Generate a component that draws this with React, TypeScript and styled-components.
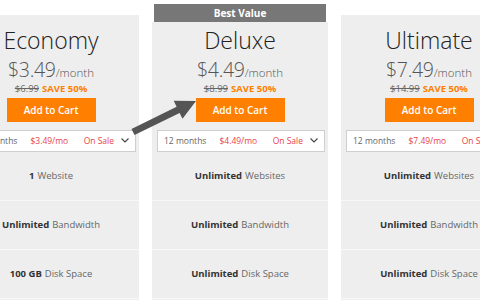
import styled, { createGlobalStyle } from 'styled-components';

const GlobalStyle = createGlobalStyle`
  html, body {
    margin: 0;
    padding: 0;
    background: #ffffff;
    font-family: "Open Sans", "Noto Sans", sans-serif;
    overflow: hidden;
  }
`;

const Page = styled.div`
  position: relative;
  width: 480px;
  height: 300px;
  overflow: hidden;
  background: #ffffff;
`;

const CardRow = styled.div`
  display: flex;
  align-items: flex-start;
  gap: 13px;
  margin-left: -37px;
  padding-top: 4px;
`;

const Card = styled.div<{ $featured?: boolean }>`
  flex: 0 0 176px;
  display: flex;
  flex-direction: column;
  margin-top: ${(p) => (p.$featured ? '0' : '11px')};
`;

const Ribbon = styled.div`
  height: 18px;
  background: #777777;
  color: #ffffff;
  font-size: 10px;
  font-weight: 700;
  line-height: 18px;
  text-align: center;
  margin: 0 2px;
`;

const CardBody = styled.div<{ $featured?: boolean }>`
  background: #eeeeee;
  padding-top: ${(p) => (p.$featured ? '3.5px' : '10.5px')};
  display: flex;
  flex-direction: column;
  align-items: center;
  height: 300px;
`;

const Title = styled.div`
  font-size: 23px;
  font-weight: 300;
  line-height: 28px;
  color: #222222;
`;

const Price = styled.div`
  margin-top: 5px;
  font-size: 19.5px;
  letter-spacing: -0.3px;
  font-weight: 300;
  line-height: 21px;
  height: 21px;
  color: #555555;

  span {
    font-size: 11.5px;
    letter-spacing: 0;
    line-height: 1;
  }
`;

const SaveLine = styled.div`
  margin-top: 3px;
  font-size: 9.5px;
  line-height: 12px;
  height: 12px;
  display: flex;
  gap: 3px;
`;

const OldPrice = styled.s`
  color: #666666;
`;

const Save = styled.span`
  color: #ff7f00;
  font-weight: 700;
`;

const CartButton = styled.button`
  margin-top: 3px;
  width: 89px;
  height: 24px;
  border: none;
  background: #ff8000;
  color: #ffffff;
  font-family: inherit;
  font-size: 10px;
  font-weight: 600;
  padding: 0;
`;

const Term = styled.div`
  margin-top: 8px;
  align-self: stretch;
  margin-left: 5px;
  margin-right: 3px;
  height: 22px;
  box-sizing: border-box;
  background: #ffffff;
  border: 1px solid #cfcfcf;
  display: flex;
  align-items: center;
  padding: 0 6px;
  font-size: 8.5px;
  color: #666666;
`;

const TermPrice = styled.span`
  color: #e8434b;
  margin-left: 13px;
`;

const OnSale = styled.span`
  color: #e8434b;
  margin-left: auto;
  margin-right: 7px;
`;

const Feature = styled.div`
  align-self: stretch;
  height: 48px;
  border-bottom: 1px solid #f8f8f8;
  display: flex;
  align-items: center;
  justify-content: center;
  font-size: 9.5px;
  color: #666666;

  b {
    color: #333333;
    font-weight: 700;
    margin-right: 3px;
  }
`;

const ArrowLayer = styled.svg`
  position: absolute;
  left: 120px;
  top: 90px;
`;

const Chevron = () => (
  <svg width="8" height="5" viewBox="0 0 8 5">
    <path d="M0.5 0.5 L4 4 L7.5 0.5" fill="none" stroke="#444" strokeWidth="1.1" />
  </svg>
);

interface Plan {
  name: string;
  price: string;
  old: string;
  mo: string;
  features: [string, string][];
  featured?: boolean;
}

const plans: Plan[] = [
  {
    name: 'Economy',
    price: '$3.49',
    old: '$6.99',
    mo: '$3.49/mo',
    features: [
      ['1', 'Website'],
      ['Unlimited', 'Bandwidth'],
      ['100 GB', 'Disk Space'],
    ],
  },
  {
    name: 'Deluxe',
    price: '$4.49',
    old: '$8.99',
    mo: '$4.49/mo',
    featured: true,
    features: [
      ['Unlimited', 'Websites'],
      ['Unlimited', 'Bandwidth'],
      ['Unlimited', 'Disk Space'],
    ],
  },
  {
    name: 'Ultimate',
    price: '$7.49',
    old: '$14.99',
    mo: '$7.49/mo',
    features: [
      ['Unlimited', 'Websites'],
      ['Unlimited', 'Bandwidth'],
      ['Unlimited', 'Disk Space'],
    ],
  },
];

export default function App() {
  return (
    <Page>
      <GlobalStyle />
      <CardRow>
        {plans.map((plan) => (
          <Card key={plan.name} $featured={plan.featured}>
            {plan.featured && <Ribbon>Best Value</Ribbon>}
            <CardBody $featured={plan.featured}>
              <Title>{plan.name}</Title>
              <Price>
                {plan.price}
                <span>/month</span>
              </Price>
              <SaveLine>
                <OldPrice>{plan.old}</OldPrice>
                <Save>SAVE 50%</Save>
              </SaveLine>
              <CartButton>Add to Cart</CartButton>
              <Term>
                12 months
                <TermPrice>{plan.mo}</TermPrice>
                <OnSale>On Sale</OnSale>
                <Chevron />
              </Term>
              {plan.features.map(([bold, rest]) => (
                <Feature key={rest}>
                  <b>{bold}</b>
                  {rest}
                </Feature>
              ))}
            </CardBody>
          </Card>
        ))}
      </CardRow>
      <ArrowLayer width="90" height="60" viewBox="120 90 90 60">
        <polygon
          points="131.5,128.9 176.6,106.7 173.7,100.8 196,101 182.5,118.8 179.6,113 134.5,135.1"
          fill="#555555"
        />
      </ArrowLayer>
    </Page>
  );
}
